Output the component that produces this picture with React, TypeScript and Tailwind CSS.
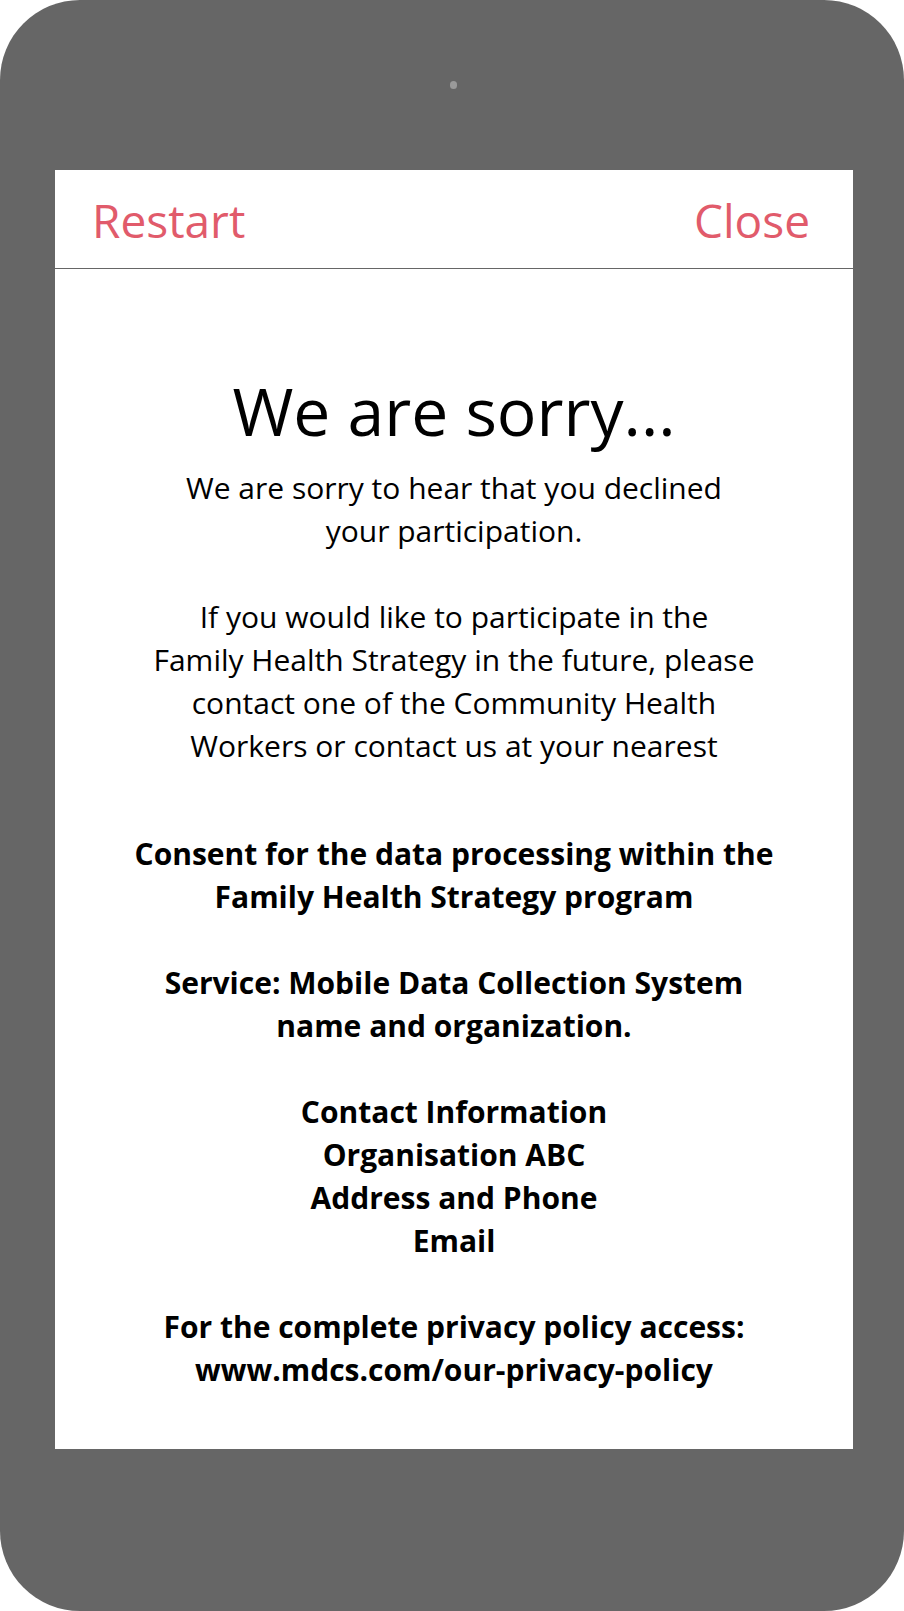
const font = { fontFamily: '"Open Sans", "Noto Sans", sans-serif' };

export default function App() {
  return (
    <div className="w-[904px] h-[1611px] bg-white" style={font}>
      <div className="w-[904px] h-[1611px] bg-[#666666] rounded-[80px] flex flex-col">
        {/* camera */}
        <div className="h-[170px] flex justify-center">
          <div className="mt-[81px] ml-[2px] w-[7px] h-[8px] rounded-full bg-[#9a9a9a]" />
        </div>

        {/* screen */}
        <div className="ml-[55px] w-[798px] h-[1279px] bg-white flex flex-col">
          <header className="h-[99px] border-b border-[#666666] flex items-center justify-between pl-[37px] pr-[43px] pt-[2px]">
            <span className="text-[46px] leading-none text-[#e15b6b]">Restart</span>
            <span className="text-[46px] leading-none text-[#e15b6b]">Close</span>
          </header>

          <div className="flex flex-col items-center text-center text-black">
            <h1 className="mt-[105px] text-[66px] leading-[72px] font-normal whitespace-nowrap">
              We are sorry...
            </h1>

            <div className="mt-[20px] text-[30px] leading-[43px] whitespace-nowrap">
              <p>
                We are sorry to hear that you declined
                <br />
                your participation.
              </p>
              <p className="mt-[43px]">
                If you would like to participate in the
                <br />
                Family Health Strategy in the future, please
                <br />
                contact one of the Community Health
                <br />
                Workers or contact us at your nearest
              </p>
            </div>

            <div className="mt-[65px] text-[30px] leading-[43px] font-bold whitespace-nowrap">
              <p>
                Consent for the data processing within the
                <br />
                Family Health Strategy program
              </p>
              <p className="mt-[43px]">
                Service: Mobile Data Collection System
                <br />
                name and organization.
              </p>
              <p className="mt-[43px]">
                Contact Information
                <br />
                Organisation ABC
                <br />
                Address and Phone
                <br />
                Email
              </p>
              <p className="mt-[43px]">
                For the complete privacy policy access:
                <br />
                www.mdcs.com/our-privacy-policy
              </p>
            </div>
          </div>
        </div>
      </div>
    </div>
  );
}
